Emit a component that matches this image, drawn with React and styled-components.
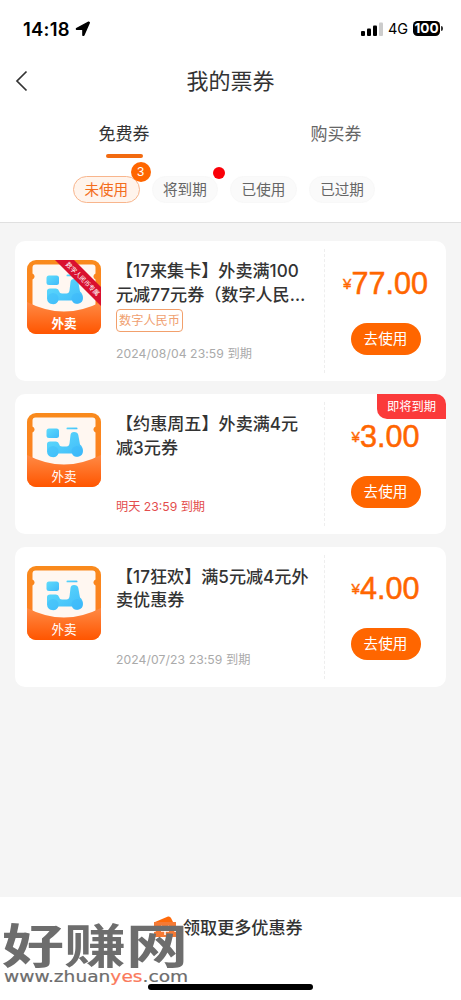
import styled, { createGlobalStyle } from "styled-components";

const GlobalStyle = createGlobalStyle`
  * {
    box-sizing: border-box;
  }
  body {
    margin: 0;
    background: #f5f5f5;
    font-family: Inter, "Noto Sans CJK SC", sans-serif;
    color: #333;
  }
  button {
    font-family: inherit;
    border: 0;
    padding: 0;
  }
`
const Page = styled.div`
  position: relative;
  display: flex;
  flex-direction: column;
  width: 461px;
  height: 1000px;
  overflow: hidden;
  background: #f5f5f5;
  white-space: nowrap;
`
const Header = styled.header`
  height: 223px;
  background: #fff;
  border-bottom: 1px solid #e0e0e0;
`
const StatusBar = styled.div`
  display: flex;
  align-items: center;
  height: 57px;
  padding: 0 18px 0 23px;
  color: #000;
`
const Time = styled.span`
  width: 52px;
  font-size: 18.4px;
  font-weight: 600;
  line-height: 20px;
  letter-spacing: 0.25px;
`
const StatusIcons = styled.div`
  display: flex;
  align-items: center;
  margin-left: auto;
`
const Network = styled.span`
  width: 25px;
  margin-left: 5px;
  font-size: 14.5px;
  font-weight: 400;
  line-height: 20px;
`
const Battery = styled.span`
  width: 27px;
  height: 15px;
  border-radius: 4.5px;
  background: #000;
  color: #fff;
  font-size: 13.6px;
  font-weight: 700;
  line-height: 15px;
  text-align: center;
`
const BatteryTip = styled.span`
  width: 2px;
  height: 5px;
  margin-left: 1px;
  border-radius: 0 2px 2px 0;
  background: #333;
`
const NavBar = styled.div`
  display: grid;
  grid-template-columns: 40px 1fr 40px;
  align-items: center;
  height: 48px;
  svg {
    margin-left: 14px;
  }
`
const NavTitle = styled.h1`
  margin: 0;
  font-size: 22px;
  font-weight: 400;
  line-height: 32px;
  text-align: center;
`
const Tabs = styled.nav`
  display: grid;
  grid-template-columns: 212px 212px;
  padding-left: 18px;
  height: 56px;
  padding-top: 17px;
`
const Tab = styled.div`
  display: flex;
  flex-direction: column;
  align-items: center;
  font-size: 17px;
  line-height: 24px;
  color: ${(props) => (props.$active ? "#333" : "#666")};
  &::after {
    content: "";
    width: 37px;
    height: 4px;
    margin-top: 8px;
    border-radius: 2px;
    background: ${(props) => (props.$active ? "#f26a10" : "transparent")};
  }
`
const Chips = styled.div`
  display: flex;
  gap: 12px;
  padding: 15px 0 0 73px;
`
const Chip = styled.div`
  position: relative;
  width: 66.6px;
  height: 27px;
  border: 1px solid ${(props) => (props.$active ? "#f8b58c" : "#f8f8f8")};
  border-radius: 14px;
  background: ${(props) => (props.$active ? "#fff4ec" : "#fafafa")};
  color: ${(props) => (props.$active ? "#f36d1c" : "#666")};
  font-size: 14.6px;
  line-height: 26px;
  text-align: center;
`
const CountBadge = styled.span`
  position: absolute;
  top: -15px;
  right: -12px;
  width: 20px;
  height: 20px;
  border-radius: 50%;
  background: #ff6600;
  color: #fff;
  font-family: "Liberation Sans", sans-serif;
  font-size: 13px;
  line-height: 20px;
`
const RedDot = styled.span`
  position: absolute;
  top: -10px;
  right: -7.5px;
  width: 12px;
  height: 12px;
  border-radius: 50%;
  background: #fa0008;
`
const List = styled.main`
  display: flex;
  flex: 1;
  flex-direction: column;
  gap: 12.8px;
  padding: 18.3px 15px 0;
`
const Card = styled.article`
  position: relative;
  display: flex;
  height: 140px;
  border-radius: 10px;
  background: #fff;
`
const IconBox = styled.div`
  width: 101px;
  padding: 18.7px 0 0 12px;
  svg {
    display: block;
  }
`
const Info = styled.div`
  display: flex;
  flex-direction: column;
  width: 208px;
  padding: 18px 0 18px;
`
const CouponTitle = styled.h2`
  margin: 0;
  font-size: 17.1px;
  font-weight: 500;
  line-height: 23.5px;
`
const Tag = styled.span`
  align-self: flex-start;
  width: 67px;
  height: 23px;
  margin-top: 3px;
  border: 1px solid #f2a06c;
  border-radius: 4px;
  color: #f0a070;
  font-size: 12.2px;
  line-height: 22px;
  text-align: center;
`
const Expiry = styled.p`
  margin: auto 0 0;
  color: ${(props) => (props.$soon ? "#e34d4d" : "#aaa")};
  font-size: 12.2px;
  line-height: 18px;
  letter-spacing: ${(props) => (props.$soon ? "0" : "0.08px")};
`
const Action = styled.div`
  display: flex;
  flex: 1;
  flex-direction: column;
  align-items: center;
  margin: 8px 0;
  padding-top: 14.5px;
  border-left: 1px dashed #eee;
`
const Price = styled.div`
  height: 38px;
  color: #ff6600;
  font-family: "Liberation Sans", sans-serif;
  font-size: 30.6px;
  line-height: 38px;
  -webkit-text-stroke: 0.5px currentColor;
  span {
    position: relative;
    top: -2px;
    font-size: 15px;
    vertical-align: 3px;
    -webkit-text-stroke-width: 0.4px;
  }
`
const UseButton = styled.button`
  width: 70px;
  height: 32px;
  margin-top: 21px;
  border-radius: 16px;
  background: #ff6600;
  color: #fff;
  font-size: 14.6px;
  line-height: 32px;
`
const SoonBadge = styled.span`
  position: absolute;
  top: 0;
  right: 0;
  width: 69px;
  height: 25px;
  border-radius: 0 10px 0 10px;
  background: #fb3a3a;
  color: #fff;
  font-size: 12.3px;
  line-height: 25px;
  text-align: center;
`
const Footer = styled.footer`
  display: flex;
  gap: 5px;
  height: 103px;
  padding: 18px 0 0 152px;
  background: #fff;
  font-size: 17.1px;
  font-weight: 500;
  line-height: 26px;
`
const HomeBar = styled.div`
  position: absolute;
  left: 148px;
  bottom: 10px;
  width: 165px;
  height: 6px;
  border-radius: 3px;
  background: #000;
`
const Watermark = styled.div`
  position: absolute;
  left: 2px;
  top: 922px;
  color: #6d6d6d;
`
const WatermarkName = styled.div`
  height: 45px;
  font-family: "Noto Sans CJK SC", sans-serif;
  font-size: 47px;
  font-weight: 700;
  line-height: 41px;
  transform: scaleX(1.32);
  transform-origin: 0 0;
`
const WatermarkUrl = styled.div`
  margin: 0 0 0 2px;
  font-family: "DejaVu Sans", sans-serif;
  font-size: 15px;
  line-height: 18px;
  -webkit-text-stroke: 0.2px currentColor;
  transform: translateY(1px) scaleX(1.24);
  transform-origin: 0 0;
  b {
    color: #fa7a5c;
    font-weight: 400;
  }
`

const coupons = [
  {
    lines: ["【17来集卡】外卖满100", "元减77元券（数字人民…"],
    tag: "数字人民币",
    expiry: "2024/08/04 23:59 到期",
    price: "77.00",
    ribbon: true,
  },
  {
    lines: ["【约惠周五】外卖满4元", "减3元券"],
    expiry: "明天 23:59 到期",
    price: "3.00",
    soon: true,
  },
  {
    lines: ["【17狂欢】满5元减4元外", "卖优惠券"],
    expiry: "2024/07/23 23:59 到期",
    price: "4.00",
  },
]

const CouponIcon = ({ id, ribbon }) => (
  <svg width="74" height="74" viewBox="0 0 74 74">
    <defs>
      <linearGradient id={`back${id}`} x1="0" y1="0" x2="0" y2="1">
        <stop offset="0" stopColor="#f98a1c" />
        <stop offset="1" stopColor="#ff7a25" />
      </linearGradient>
      <linearGradient id={`front${id}`} x1="0" y1="0" x2="0" y2="1">
        <stop offset="0" stopColor="#ff8a45" />
        <stop offset="1" stopColor="#ff5500" />
      </linearGradient>
      <linearGradient id={`blue${id}`} x1="0" y1="0" x2="1" y2="1">
        <stop offset="0" stopColor="#5fdcfb" />
        <stop offset="1" stopColor="#3fbafa" />
      </linearGradient>
      <clipPath id={`clip${id}`}>
        <rect width="74" height="74" rx="9" />
      </clipPath>
    </defs>
    <g clipPath={`url(#clip${id})`}>
      <rect width="74" height="74" fill={`url(#back${id})`} />
      <path
        d="M8.500 4.500H65.500Q68.500 4.500 68.500 7.500V13.500A3.200 3.200 0 0 0 68.500 19.500V60H5.500V19.500A3.200 3.200 0 0 0 5.500 13.500V7.500Q5.500 4.500 8.500 4.500Z"
        fill="#fff7f1"
      />
      <path d="M0 42Q37 61 74 42V74H0Z" fill={`url(#front${id})`} />
      <g fill={`url(#blue${id})`}>
        <rect x="19.500" y="15.500" width="12.500" height="9.500" rx="2.500" />
        <rect x="39.500" y="14.500" width="11" height="1.800" rx=".9" />
        <path d="M20 31Q20 28.500 23 28.500H29Q31.500 28.500 32 31Q32.500 33.500 35 33.500H39.500Q42 33.500 42.500 30.500L43.500 22Q43.800 19 47 19Q50.800 19 51.300 22L53 31.500Q56 34 56 38A5.800 5.800 0 0 1 45 40.500H31.500A6 6 0 0 1 20 38.500Z" />
      </g>
      <g fill="#35b2fa" opacity=".3">
        <circle cx="26" cy="38.500" r="5.500" />
        <circle cx="50" cy="38.500" r="5.500" />
      </g>
      <text
        x="37"
        y="68"
        fill="#fff"
        fontSize="12.600"
        fontWeight={ribbon ? 700 : 400}
        textAnchor="middle"
      >
        外卖
      </text>
      {ribbon && (
        <>
          <path d="M28 0H47L74 27V46Z" fill="#d9102f" />
          <text
            transform="translate(54 20.500) rotate(45)"
            fill="#fff"
            fontSize="6.400"
            textAnchor="middle"
          >
            数字人民币专属
          </text>
        </>
      )}
    </g>
  </svg>
)

const App = () => {
  return (
    <Page lang="zh-CN">
      <GlobalStyle />
      <Header>
        <StatusBar>
          <Time>14:18</Time>
          <svg width="16" height="16" viewBox="0 0 16 16">
            <path
              d="M14.300 1.600L8.800 14.200H7.900V8.200H1.500V7.500L13.600 1.200Z"
              stroke="#000"
              strokeWidth="1.400"
              strokeLinejoin="round"
            />
          </svg>
          <StatusIcons>
            <svg width="22" height="14" viewBox="0 0 22 14">
              <rect x="0" y="9" width="4" height="5" rx="1" />
              <rect x="6" y="6.500" width="4" height="7.500" rx="1" />
              <rect x="12" y="3.500" width="4" height="10.500" rx="1" />
              <rect x="18" y="0.500" width="4" height="13.500" rx="1" fill="#ccc" />
            </svg>
            <Network>4G</Network>
            <Battery>100</Battery>
            <BatteryTip />
          </StatusIcons>
        </StatusBar>
        <NavBar>
          <svg width="15" height="22" viewBox="0 0 15 22">
            <path d="M12.500 1.500L3 11L12.500 20.500" fill="none" stroke="#333" strokeWidth="1.700" />
          </svg>
          <NavTitle>我的票券</NavTitle>
        </NavBar>
        <Tabs>
          <Tab $active>免费券</Tab>
          <Tab>购买券</Tab>
        </Tabs>
        <Chips>
          <Chip $active>
            未使用<CountBadge>3</CountBadge>
          </Chip>
          <Chip>
            将到期<RedDot />
          </Chip>
          <Chip>已使用</Chip>
          <Chip>已过期</Chip>
        </Chips>
      </Header>
      <List>
        {coupons.map((coupon, index) => (
          <Card key={coupon.expiry}>
            <IconBox>
              <CouponIcon id={index} ribbon={coupon.ribbon} />
            </IconBox>
            <Info>
              <CouponTitle>
                {coupon.lines[0]}
                <br />
                {coupon.lines[1]}
              </CouponTitle>
              {coupon.tag && <Tag>{coupon.tag}</Tag>}
              <Expiry $soon={coupon.soon}>{coupon.expiry}</Expiry>
            </Info>
            <Action>
              <Price>
                <span>¥</span>
                {coupon.price}
              </Price>
              <UseButton>去使用</UseButton>
            </Action>
            {coupon.soon && <SoonBadge>即将到期</SoonBadge>}
          </Card>
        ))}
      </List>
      <Footer>
        <svg width="26" height="24" viewBox="0 0 26 24">
          <path d="M3 7L16 1.500Q18 1 19 3L21 7Z" fill="#ff6a0a" />
          <path d="M2 7H24V12A2.500 2.500 0 0 0 24 17V22H2V17A2.500 2.500 0 0 0 2 12Z" fill="#f57a35" />
          <path d="M9 11L13 15L17 11M13 15V20M9 16H17" fill="none" stroke="#fff" strokeWidth="1.500" />
        </svg>
        领取更多优惠券
      </Footer>
      <HomeBar />
      <Watermark>
        <WatermarkName>好赚网</WatermarkName>
        <WatermarkUrl>
          www.zhuan<b>yes</b>.com
        </WatermarkUrl>
      </Watermark>
    </Page>
  );
}
export default App
